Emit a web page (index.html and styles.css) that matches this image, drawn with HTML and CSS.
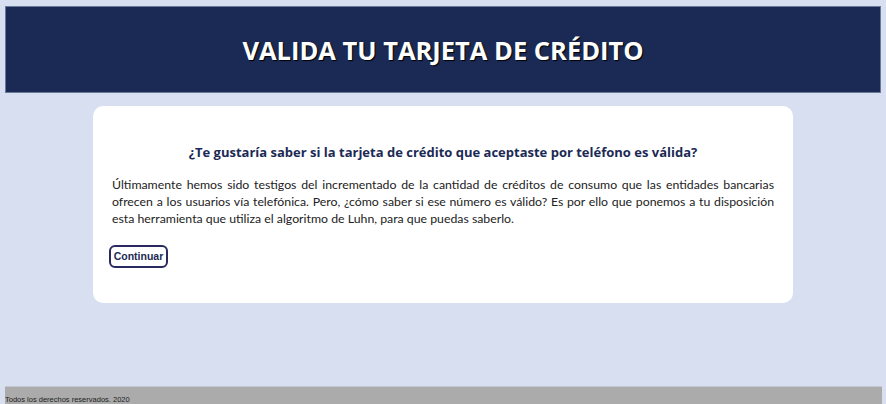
FILE: index.html
```html
<!DOCTYPE html>
<html lang="es">
<head>
<meta charset="utf-8">
<title>Valida tu tarjeta de crédito</title>
<link rel="stylesheet" href="styles.css">
</head>
<body>
<header class="site-header">
  <h1 class="site-title">VALIDA TU TARJETA DE CRÉDITO</h1>
</header>
<main class="main">
  <section class="card">
    <h2 class="card-title">¿Te gustaría saber si la tarjeta de crédito que aceptaste por teléfono es válida?</h2>
    <p class="card-text">Últimamente hemos sido testigos del incrementado de la cantidad de créditos de consumo que las entidades bancarias ofrecen a los usuarios vía telefónica. Pero, ¿cómo saber si ese número es válido? Es por ello que ponemos a tu disposición esta herramienta que utiliza el algoritmo de Luhn, para que puedas saberlo.</p>
    <button class="btn" type="button">Continuar</button>
  </section>
</main>
<footer class="site-footer">Todos los derechos reservados. 2020</footer>
</body>
</html>
```
FILE: styles.css
```css
html, body {
  height: 100%;
}
body {
  margin: 0;
  padding: 6px 5px 0 5px;
  box-sizing: border-box;
  background: #d7dff0;
  display: flex;
  flex-direction: column;
  font-family: "Open Sans", "Noto Sans", sans-serif;
  overflow: hidden;
}
.site-header {
  height: 87px;
  box-sizing: border-box;
  background: #1b2a55;
  border: 1px solid #6a7898;
  display: flex;
  align-items: center;
  justify-content: center;
}
.site-title {
  margin: 0;
  color: #fff;
  font-family: "Open Sans", sans-serif;
  font-weight: 700;
  font-size: 25.5px;
  text-shadow: 1px 1px 1px #000;
}
.main {
  flex: 1;
  display: flex;
  justify-content: center;
  align-items: flex-start;
  padding-top: 13px;
}
.card {
  width: 700px;
  height: 197px;
  box-sizing: border-box;
  background: #fff;
  border-radius: 10px;
  padding: 36px 19px 0 19px;
}
.card-title {
  margin: 0 0 14px;
  text-align: center;
  color: #1b2a55;
  font-family: "Open Sans", sans-serif;
  font-size: 13px;
  font-weight: 700;
  line-height: 20px;
}
.card-text {
  margin: 0 0 16px;
  color: #222;
  font-family: Lato, sans-serif;
  font-size: 12.3px;
  line-height: 17px;
  text-align: justify;
}
.btn {
  margin-left: -3px;
  width: 59px;
  height: 23px;
  padding: 0;
  background: #fff;
  border: 2px solid #2b2a60;
  border-radius: 6px;
  font-family: "Liberation Sans", Arial, sans-serif;
  font-weight: 700;
  font-size: 10.5px;
  color: #1b2a55;
}
.site-footer {
  height: 18px;
  box-sizing: border-box;
  margin-right: -1px;
  background: #ababab;
  border-top: 1px solid #c4c8d0;
  padding-top: 8px;
  font-family: "Liberation Sans", sans-serif;
  font-size: 7.5px;
  line-height: 10px;
  color: #222;
  white-space: nowrap;
}
```
